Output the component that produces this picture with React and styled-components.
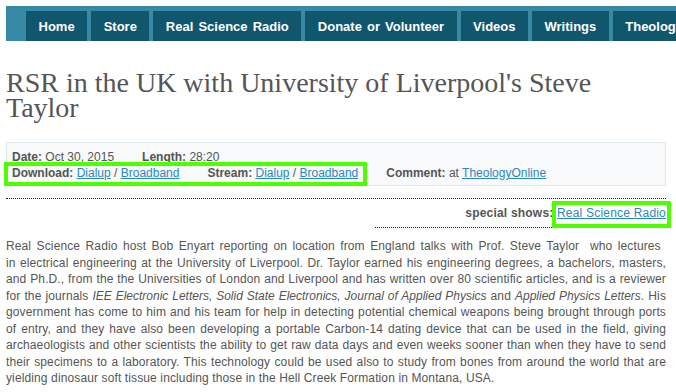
import React from 'react';
import styled, { createGlobalStyle } from 'styled-components';

const Global = createGlobalStyle`
  html, body { margin: 0; padding: 0; background: #fff; overflow: hidden; }
  body { font-family: "Liberation Sans", Arial, sans-serif; color: #555; }
`;

const Page = styled.div`
  padding: 6px 0 0 6px;
`;

const NavBar = styled.nav`
  display: flex;
  gap: 4px;
  height: 30px;
  padding: 5px 0 0 20px;
  background: #3889a6;
  overflow: hidden;
`;

const NavItem = styled.a`
  flex: none;
  display: flex;
  align-items: center;
  padding: 0 12.5px;
  background: #10566d;
  color: #fff;
  font: bold 13px "Liberation Sans", Arial, sans-serif;
  word-spacing: 1.5px;
  text-decoration: none;
  white-space: nowrap;
`;

const Content = styled.div`
  width: 660px;
`;

const Title = styled.h1`
  margin: 29px 0 0;
  font: normal 28px/25px "Liberation Serif", "Times New Roman", serif;
  color: #555;
`;

const MetaBox = styled.div`
  margin-top: 22px;
  padding: 6px 5px 4px;
  border: 1px solid #dfe9ef;
  background: #f8f9fa;
  font-size: 12px;
  line-height: 16px;
`;

const MetaRow = styled.div`
  display: flex;
  gap: 28px;
  white-space: nowrap;
`;

const Field = styled.span``;

const Label = styled.b`
  font-weight: bold;
  color: #555;
`;

const Link = styled.a`
  color: #2b87be;
  text-decoration: underline;
`;

const Highlight = styled.span`
  position: relative;
  display: inline-flex;
  gap: 28px;
  &::after {
    content: '';
    position: absolute;
    left: ${p => p.$l}px;
    right: ${p => p.$r}px;
    top: ${p => p.$t}px;
    bottom: ${p => p.$b}px;
    border: 4px solid #4dff00;
    pointer-events: none;
  }
`;

const Divider = styled.div`
  margin-top: 12px;
  border-top: 1px dotted #222;
`;

const SpecialRow = styled.div`
  display: flex;
  justify-content: flex-end;
`;

const SpecialInner = styled.div`
  padding: 5.5px 0 6.5px 90px;
  border-bottom: 1px dotted #222;
  font-size: 12px;
  line-height: 16px;
  letter-spacing: 0.2px;
`;

const Body = styled.p`
  margin: 10px 0 0;
  font-size: 12px;
  line-height: 16.5px;
  letter-spacing: 0.12px;
  text-align: justify;
  color: #555;
`;

const Lead = styled.span`
  word-spacing: 1.8px;
`;

const Em = styled.i`
  letter-spacing: 0;
`;

const navItems = ['Home', 'Store', 'Real Science Radio', 'Donate or Volunteer', 'Videos', 'Writings', 'Theology'];

export default function App() {
  return (
    <>
      <Global />
      <Page>
        <NavBar>
          {navItems.map(n => <NavItem key={n} href="#">{n}</NavItem>)}
        </NavBar>
        <Content>
          <Title>RSR in the UK with University of Liverpool's Steve Taylor</Title>
          <MetaBox>
            <MetaRow>
              <Field><Label>Date:</Label> Oct 30, 2015</Field>
              <Field><Label>Length:</Label> 28:20</Field>
            </MetaRow>
            <MetaRow>
              <Highlight $l={-8} $r={-9} $t={-3} $b={-5}>
                <Field><Label>Download:</Label> <Link href="#">Dialup</Link> / <Link href="#">Broadband</Link></Field>
                <Field><Label>Stream:</Label> <Link href="#">Dialup</Link> / <Link href="#">Broadband</Link></Field>
              </Highlight>
              <Field><Label>Comment:</Label> at <Link href="#">TheologyOnline</Link></Field>
            </MetaRow>
          </MetaBox>
          <Divider />
          <SpecialRow>
            <SpecialInner>
              <Label>special shows:</Label>{' '}
              <Highlight $l={-5} $r={-5} $t={-3.5} $b={-7.5}>
                <Link href="#">Real Science Radio</Link>
              </Highlight>
            </SpecialInner>
          </SpecialRow>
          <Body>
            <Lead>Real Science Radio host Bob Enyart reporting on location from England talks with Prof. Steve Taylor&nbsp; who lectures&nbsp;</Lead> in electrical engineering at the University of Liverpool. Dr. Taylor earned his engineering degrees, a bachelors, masters, and Ph.D., from the the Universities of London and Liverpool and has written over 80 scientific articles, and is a reviewer for the journals <Em>IEE Electronic Letters, Solid State Electronics, Journal of Applied Physics</Em> and <Em>Applied Physics Letters</Em>. His government has come to him and his team for help in detecting potential chemical weapons being brought through ports of entry, and they have also been developing a portable Carbon-14 dating device that can be used in the field, giving archaeologists and other scientists the ability to get raw data days and even weeks sooner than when they have to send their specimens to a laboratory. This technology could be used also to study from bones from around the world that are yielding dinosaur soft tissue including those in the Hell Creek Formation in Montana, USA.
          </Body>
        </Content>
      </Page>
    </>
  );
}
